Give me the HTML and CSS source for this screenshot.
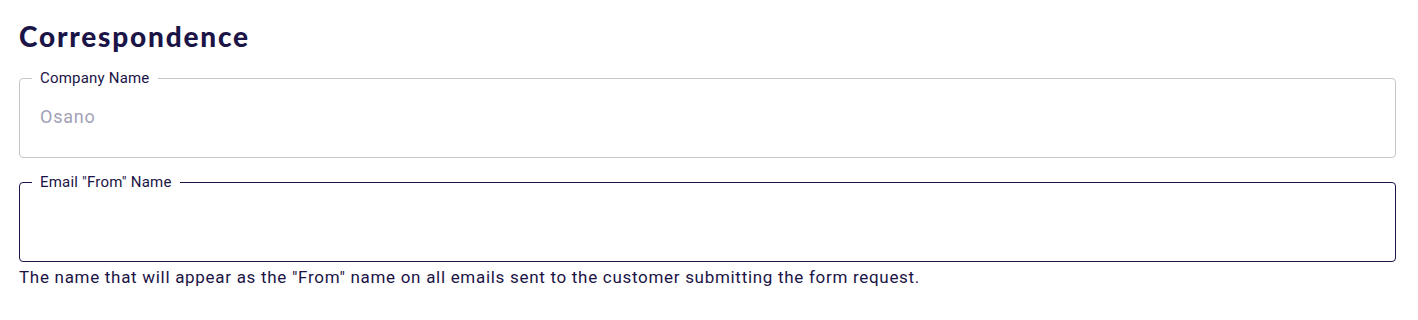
FILE: index.html
```html
<!DOCTYPE html>
<html lang="en">
<head>
<meta charset="utf-8">
<title>Correspondence</title>
<link rel="stylesheet" href="styles.css">
</head>
<body>
<section class="panel">
  <h2 class="title">Correspondence</h2>
  <fieldset class="field field-disabled">
    <legend class="field-label">Company Name</legend>
    <input class="field-input" type="text" value="Osano" disabled>
  </fieldset>
  <fieldset class="field field-active">
    <legend class="field-label">Email "From" Name</legend>
    <input class="field-input" type="text" value="">
  </fieldset>
  <p class="helper">The name that will appear as the "From" name on all emails sent to the customer submitting the form request.</p>
</section>
</body>
</html>
```
FILE: styles.css
```css
* { box-sizing: border-box; }
html, body { margin: 0; padding: 0; background: #ffffff; }
body { font-family: Roboto, "Liberation Sans", sans-serif; color: #1b1446; }
.panel {
  padding: 18px 22px 0 19px;
  display: flex;
  flex-direction: column;
}
.title {
  margin: 0 0 16px 0;
  font-family: Lato, "DejaVu Sans", sans-serif;
  font-weight: 900;
  font-size: 28px;
  line-height: 36px;
  letter-spacing: 1.8px;
  color: #1b1446;
}
.field {
  display: block;
  margin: 0;
  padding: 0 20px;
  border-radius: 4px;
  min-width: 0;
  height: 88px;
}
.field-disabled { border: 1px solid #c6c6c6; }
.field-active { border: 1px solid #1b1446; margin-top: 16px; }
.field-label {
  margin-left: -8px;
  padding: 0 8px;
  font-size: 15px;
  line-height: 16px;
  letter-spacing: 0.2px;
  color: #1b1446;
}
.field-input {
  display: block;
  width: 100%;
  border: 0;
  outline: none;
  background: transparent;
  padding: 0;
  margin: 19px 0 0 0;
  font-family: Roboto, "Liberation Sans", sans-serif;
  font-size: 18px;
  line-height: 24px;
  letter-spacing: 0.8px;
  color: #1b1446;
}
.field-input:disabled { color: #a3a1b8; -webkit-text-fill-color: #a3a1b8; }
.helper {
  margin: 3px 0 0 0;
  font-size: 17px;
  line-height: 24px;
  letter-spacing: 0.7px;
  color: #1b1446;
}
```
